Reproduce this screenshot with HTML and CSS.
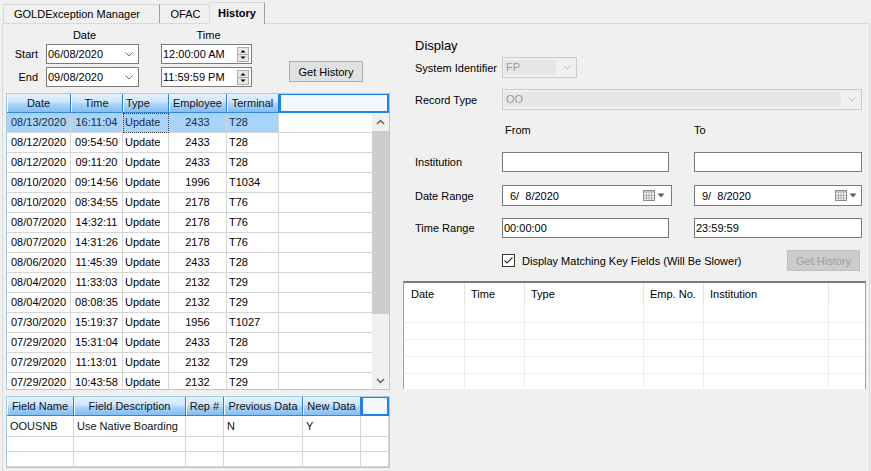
FILE: index.html
```html
<!DOCTYPE html>
<html>
<head>
<meta charset="utf-8">
<title>History</title>
<link rel="stylesheet" href="styles.css">
</head>
<body>
<div class="tabs">
  <div class="tab tab-gold">GOLDException Manager</div>
  <div class="tab tab-ofac">OFAC</div>
  <div class="tab tab-history">History</div>
</div>
<div class="page">
  <div class="left">
    <div class="dt-head"><span class="h-date">Date</span><span class="h-time">Time</span></div>
    <div class="dt-area">
      <div class="dt-rows">
        <div class="dt-row">
          <span class="dt-label">Start</span>
          <div class="combo-date"><span>06/08/2020</span><svg class="chev" width="8" height="5" viewBox="0 0 8 5"><path d="M0.5 0.5 L4 4 L7.5 0.5" fill="none" stroke="#707070"/></svg></div>
          <div class="timebox"><span>12:00:00 AM</span><svg width="12" height="15" viewBox="0 0 12 15"><rect x="0.5" y="0.5" width="11" height="7" fill="#e6e6e6" stroke="#adadad"/><rect x="0.5" y="7.5" width="11" height="7" fill="#e6e6e6" stroke="#adadad"/><path d="M3.5 5.5 L8.5 5.5 L6 3 Z" fill="#000"/><path d="M3.5 9.5 L8.5 9.5 L6 12 Z" fill="#000"/></svg></div>
        </div>
        <div class="dt-row">
          <span class="dt-label">End</span>
          <div class="combo-date"><span>09/08/2020</span><svg class="chev" width="8" height="5" viewBox="0 0 8 5"><path d="M0.5 0.5 L4 4 L7.5 0.5" fill="none" stroke="#707070"/></svg></div>
          <div class="timebox"><span>11:59:59 PM</span><svg width="12" height="15" viewBox="0 0 12 15"><rect x="0.5" y="0.5" width="11" height="7" fill="#e6e6e6" stroke="#adadad"/><rect x="0.5" y="7.5" width="11" height="7" fill="#e6e6e6" stroke="#adadad"/><path d="M3.5 5.5 L8.5 5.5 L6 3 Z" fill="#000"/><path d="M3.5 9.5 L8.5 9.5 L6 12 Z" fill="#000"/></svg></div>
        </div>
      </div>
      <button class="btn-get">Get History</button>
    </div>

    <div class="dgv grid-main">
      <div class="gh">
        <div class="hc m-date">Date</div>
        <div class="hc m-time">Time</div>
        <div class="hc m-type left">Type</div>
        <div class="hc m-emp">Employee</div>
        <div class="hc m-term">Terminal</div>
        <div class="hc-blank m-hfill"></div>
      </div>
      <div class="gb">
        <div class="rows">
          <div class="r sel"><div class="c m-date">08/13/2020</div><div class="c m-time">16:11:04</div><div class="c m-type left focus">Update</div><div class="c m-emp">2433</div><div class="c m-term left">T28</div><div class="c m-fill"></div></div>
          <div class="r"><div class="c m-date">08/12/2020</div><div class="c m-time">09:54:50</div><div class="c m-type left">Update</div><div class="c m-emp">2433</div><div class="c m-term left">T28</div><div class="c m-fill"></div></div>
          <div class="r"><div class="c m-date">08/12/2020</div><div class="c m-time">09:11:20</div><div class="c m-type left">Update</div><div class="c m-emp">2433</div><div class="c m-term left">T28</div><div class="c m-fill"></div></div>
          <div class="r"><div class="c m-date">08/10/2020</div><div class="c m-time">09:14:56</div><div class="c m-type left">Update</div><div class="c m-emp">1996</div><div class="c m-term left">T1034</div><div class="c m-fill"></div></div>
          <div class="r"><div class="c m-date">08/10/2020</div><div class="c m-time">08:34:55</div><div class="c m-type left">Update</div><div class="c m-emp">2178</div><div class="c m-term left">T76</div><div class="c m-fill"></div></div>
          <div class="r"><div class="c m-date">08/07/2020</div><div class="c m-time">14:32:11</div><div class="c m-type left">Update</div><div class="c m-emp">2178</div><div class="c m-term left">T76</div><div class="c m-fill"></div></div>
          <div class="r"><div class="c m-date">08/07/2020</div><div class="c m-time">14:31:26</div><div class="c m-type left">Update</div><div class="c m-emp">2178</div><div class="c m-term left">T76</div><div class="c m-fill"></div></div>
          <div class="r"><div class="c m-date">08/06/2020</div><div class="c m-time">11:45:39</div><div class="c m-type left">Update</div><div class="c m-emp">2433</div><div class="c m-term left">T28</div><div class="c m-fill"></div></div>
          <div class="r"><div class="c m-date">08/04/2020</div><div class="c m-time">11:33:03</div><div class="c m-type left">Update</div><div class="c m-emp">2132</div><div class="c m-term left">T29</div><div class="c m-fill"></div></div>
          <div class="r"><div class="c m-date">08/04/2020</div><div class="c m-time">08:08:35</div><div class="c m-type left">Update</div><div class="c m-emp">2132</div><div class="c m-term left">T29</div><div class="c m-fill"></div></div>
          <div class="r"><div class="c m-date">07/30/2020</div><div class="c m-time">15:19:37</div><div class="c m-type left">Update</div><div class="c m-emp">1956</div><div class="c m-term left">T1027</div><div class="c m-fill"></div></div>
          <div class="r"><div class="c m-date">07/29/2020</div><div class="c m-time">15:31:04</div><div class="c m-type left">Update</div><div class="c m-emp">2433</div><div class="c m-term left">T28</div><div class="c m-fill"></div></div>
          <div class="r"><div class="c m-date">07/29/2020</div><div class="c m-time">11:13:01</div><div class="c m-type left">Update</div><div class="c m-emp">2132</div><div class="c m-term left">T29</div><div class="c m-fill"></div></div>
          <div class="r"><div class="c m-date">07/29/2020</div><div class="c m-time">10:43:58</div><div class="c m-type left">Update</div><div class="c m-emp">2132</div><div class="c m-term left">T29</div><div class="c m-fill"></div></div>
        </div>
        <div class="vscroll">
          <div class="sb-btn"><svg width="9" height="6" viewBox="0 0 9 6"><path d="M1 5 L4.5 1.5 L8 5" fill="none" stroke="#606060" stroke-width="1.5"/></svg></div>
          <div class="sb-thumb"></div>
          <div class="sb-track"></div>
          <div class="sb-btn"><svg width="9" height="6" viewBox="0 0 9 6"><path d="M1 1 L4.5 4.5 L8 1" fill="none" stroke="#606060" stroke-width="1.5"/></svg></div>
        </div>
      </div>
    </div>

    <div class="dgv grid-detail">
      <div class="gh">
        <div class="hc d-name">Field Name</div>
        <div class="hc d-desc">Field Description</div>
        <div class="hc d-rep">Rep #</div>
        <div class="hc d-prev">Previous Data</div>
        <div class="hc d-new">New Data</div>
        <div class="hc-blank d-fill"></div>
      </div>
      <div class="r r1"><div class="c d-name left">OOUSNB</div><div class="c d-desc left">Use Native Boarding</div><div class="c d-rep"></div><div class="c d-prev left">N</div><div class="c d-new left">Y</div><div class="c d-fill"></div></div>
      <div class="r r2"><div class="c d-name"></div><div class="c d-desc"></div><div class="c d-rep"></div><div class="c d-prev"></div><div class="c d-new"></div><div class="c d-fill"></div></div>
      <div class="r r2"><div class="c d-name"></div><div class="c d-desc"></div><div class="c d-rep"></div><div class="c d-prev"></div><div class="c d-new"></div><div class="c d-fill"></div></div>
    </div>
  </div>

  <div class="right">
    <div class="disp-title">Display</div>
    <div class="frow r-sysid">
      <span class="flabel">System Identifier</span>
      <div class="combo-dis cd-sys"><span class="cd-text">FP</span><svg width="8" height="5" viewBox="0 0 8 5"><path d="M0.5 0.5 L4 4 L7.5 0.5" fill="none" stroke="#bdbdbd"/></svg></div>
    </div>
    <div class="frow r-rec">
      <span class="flabel">Record Type</span>
      <div class="combo-dis cd-rec"><span class="cd-text">OO</span><svg width="8" height="5" viewBox="0 0 8 5"><path d="M0.5 0.5 L4 4 L7.5 0.5" fill="none" stroke="#bdbdbd"/></svg></div>
    </div>
    <div class="fromto"><span class="ft-from">From</span><span class="ft-to">To</span></div>
    <div class="frow r-inst">
      <span class="flabel">Institution</span>
      <div class="tb tb1"></div>
      <div class="tb tb2"></div>
    </div>
    <div class="frow r-date">
      <span class="flabel">Date Range</span>
      <div class="dp dp1"><span class="dp-text">6/  8/2020</span><span class="dp-icons"><svg width="12" height="11" viewBox="0 0 12 11"><rect x="0.5" y="0.5" width="11" height="10" fill="#f6f6f6" stroke="#8c8c8c"/><rect x="1" y="1" width="10" height="2" fill="#c4c4c4"/><path d="M1 5.5 H11 M1 8 H11 M3.5 3 V10 M6 3 V10 M8.5 3 V10" stroke="#b0b0b0"/></svg><svg width="8" height="5" viewBox="0 0 8 5"><path d="M0.5 0.5 H7.5 L4 4.5 Z" fill="#4e5f80"/></svg></span></div>
      <div class="dp dp2"><span class="dp-text">9/  8/2020</span><span class="dp-icons"><svg width="12" height="11" viewBox="0 0 12 11"><rect x="0.5" y="0.5" width="11" height="10" fill="#f6f6f6" stroke="#8c8c8c"/><rect x="1" y="1" width="10" height="2" fill="#c4c4c4"/><path d="M1 5.5 H11 M1 8 H11 M3.5 3 V10 M6 3 V10 M8.5 3 V10" stroke="#b0b0b0"/></svg><svg width="8" height="5" viewBox="0 0 8 5"><path d="M0.5 0.5 H7.5 L4 4.5 Z" fill="#4e5f80"/></svg></span></div>
    </div>
    <div class="frow r-time">
      <span class="flabel">Time Range</span>
      <div class="tb tb1">00:00:00</div>
      <div class="tb tb2">23:59:59</div>
    </div>
    <div class="chk-row">
      <svg class="chk" width="13" height="13" viewBox="0 0 13 13"><rect x="0.5" y="0.5" width="12" height="12" fill="#fff" stroke="#333"/><path d="M2.5 6.5 L5 9 L10.5 3.5" fill="none" stroke="#333" stroke-width="1.2"/></svg>
      <span class="chk-label">Display Matching Key Fields (Will Be Slower)</span>
      <button class="btn-dis">Get History</button>
    </div>
    <div class="listview">
      <div class="lv-head">
        <div class="lh l-date">Date</div>
        <div class="lh l-time">Time</div>
        <div class="lh l-type">Type</div>
        <div class="lh l-emp">Emp. No.</div>
        <div class="lh l-inst">Institution</div>
        <div class="lh l-fill"></div>
      </div>
      <div class="lr"><div class="lc l-date"></div><div class="lc l-time"></div><div class="lc l-type"></div><div class="lc l-emp"></div><div class="lc l-inst"></div><div class="lc l-fill"></div></div>
      <div class="lr"><div class="lc l-date"></div><div class="lc l-time"></div><div class="lc l-type"></div><div class="lc l-emp"></div><div class="lc l-inst"></div><div class="lc l-fill"></div></div>
      <div class="lr"><div class="lc l-date"></div><div class="lc l-time"></div><div class="lc l-type"></div><div class="lc l-emp"></div><div class="lc l-inst"></div><div class="lc l-fill"></div></div>
      <div class="lr"><div class="lc l-date"></div><div class="lc l-time"></div><div class="lc l-type"></div><div class="lc l-emp"></div><div class="lc l-inst"></div><div class="lc l-fill"></div></div>
      <div class="lr"><div class="lc l-date"></div><div class="lc l-time"></div><div class="lc l-type"></div><div class="lc l-emp"></div><div class="lc l-inst"></div><div class="lc l-fill"></div></div>
    </div>
  </div>
</div>
</body>
</html>
```

FILE: styles.css
```css
* { box-sizing: border-box; }
html, body { margin: 0; padding: 0; }
body {
  width: 871px;
  height: 471px;
  overflow: hidden;
  background: #f0f0f0;
  font-family: "Liberation Sans", Arial, sans-serif;
  font-size: 11px;
  color: #000;
}

/* ---------- tabs ---------- */
.tabs {
  display: flex;
  align-items: flex-end;
  height: 23px;
  padding-left: 3px;
  position: relative;
  z-index: 1;
}
.tab {
  height: 19px;
  border: 1px solid #d9d9d9;
  border-bottom: none;
  background: #f0f0f0;
  line-height: 18px;
  white-space: nowrap;
  color: #000;
}
.tab-gold { width: 157px; padding-left: 10px; border-right-color: #a0a0a0; }
.tab-ofac { width: 49px; text-align: center; border-left: none; border-right: none; padding-left: 2px; }
.tab-history {
  width: 56px;
  height: 22px;
  margin-bottom: -1px;
  font-weight: bold;
  text-align: center;
  line-height: 21px;
  border-right-color: #a0a0a0;
}

/* ---------- page ---------- */
.page {
  margin-left: 2px;
  width: 868px;
  height: 448px;
  border: 1px solid #d9d9d9;
  border-bottom: none;
  display: flex;
  overflow: hidden;
}
.left { width: 392px; flex: none; }
.right { width: 474px; flex: none; padding-left: 8px; }

/* ---------- date/time block ---------- */
.dt-head { display: flex; height: 13px; margin-top: 5px; padding-left: 59px; line-height: 13px; }
.dt-head span { width: 45px; text-align: center; }
.dt-head .h-time { margin-left: 79px; }

.dt-area { display: flex; margin-top: 2px; }
.dt-rows { display: flex; flex-direction: column; gap: 3px; }
.dt-row { display: flex; align-items: center; height: 20px; }
.dt-label { width: 43px; text-align: right; padding-right: 8px; }
.combo-date {
  width: 93px;
  height: 20px;
  border: 1px solid #7a7a7a;
  background: #fff;
  display: flex;
  align-items: center;
  justify-content: space-between;
  padding: 0 5px 0 1px;
}
.timebox {
  margin-left: 22px;
  width: 91px;
  height: 20px;
  border: 1px solid #7a7a7a;
  background: #fff;
  display: flex;
  align-items: center;
  justify-content: space-between;
  padding: 0 2px 0 1px;
}
.btn-get {
  margin-left: 37px;
  align-self: flex-end;
  margin-bottom: 5px;
  width: 74px;
  height: 21px;
  background: #e1e1e1;
  border: 1px solid #adadad;
  font: inherit;
  color: #000;
  padding: 0;
}

/* ---------- data grids ---------- */
.dgv {
  margin-left: 3px;
  width: 384px;
  border: 1px solid #a3cfe3;
  background: #fff;
  overflow: hidden;
}
.grid-main { margin-top: 6px; height: 297px; }
.grid-detail { margin-top: 6px; }

.gh { display: flex; height: 19px; }
.hc {
  flex: none;
  height: 19px;
  line-height: 18px;
  background: linear-gradient(#e6f2fe 0%, #cbe5fc 45%, #acd4f9 55%, #82bef4 100%);
  border-right: 1px solid #2a7fd6;
  border-bottom: 1px solid #3587d8;
  box-shadow: inset 1px 0 0 #f6fbff;
  text-align: center;
  color: #141414;
  white-space: nowrap;
  overflow: hidden;
}
.hc.left { text-align: left; padding-left: 3px; }
.hc-blank {
  flex: none;
  height: 19px;
  background: #f3f8fe;
  border: 2px solid #1a84e9;
  border-top-width: 1px;
}

.m-date { width: 64px; }
.m-time { width: 52px; }
.m-type { width: 46px; }
.m-emp { width: 58px; }
.m-term { width: 52px; }
.m-hfill { width: 110px; }
.m-fill { width: 93px; border-right: none !important; }

.gb { display: flex; height: 276px; }
.rows { width: 365px; flex: none; }
.r { display: flex; height: 20px; }
.c {
  flex: none;
  height: 20px;
  line-height: 19px;
  border-right: 1px solid #d5d5d5;
  border-bottom: 1px solid #d5d5d5;
  text-align: center;
  white-space: nowrap;
  overflow: hidden;
}
.c.left { text-align: left; padding-left: 2px; }
.r.sel .c { background: #a8d4fb; color: #1e2b44; }
.r.sel .c.m-fill { background: #fff; }
.c.focus { outline: 1px dotted #3a3a3a; outline-offset: -1px; }

.vscroll { width: 17px; flex: none; background: #f0f0f0; display: flex; flex-direction: column; }
.sb-btn { height: 17px; flex: none; display: flex; align-items: center; justify-content: center; }
.sb-thumb { height: 183px; margin-top: 1px; background: #cdcdcd; flex: none; }
.sb-track { flex: 1; }

.d-name { width: 67px; }
.d-desc { width: 112px; }
.d-rep { width: 38px; }
.d-prev { width: 79px; }
.d-new { width: 58px; }
.d-fill { width: 28px; }
.grid-detail .r1, .grid-detail .r1 .c { height: 21px; line-height: 20px; }
.grid-detail .r2, .grid-detail .r2 .c { height: 15px; }
.grid-detail .c.left { padding-left: 3px; color: #111; }

/* ---------- right form ---------- */
.disp-title { margin-top: 14px; padding-left: 12px; font-size: 13px; line-height: 15px; }
.frow { display: flex; align-items: center; padding-left: 12px; }
.flabel { width: 87px; flex: none; white-space: nowrap; }
.r-sysid { margin-top: 4px; height: 21px; }
.r-rec { margin-top: 11px; height: 21px; }
.combo-dis {
  height: 21px;
  border: 1px solid #cccccc;
  background: #f0f0f0;
  display: flex;
  align-items: center;
  padding: 2px 5px 2px 1px;
  gap: 7px;
}
.cd-text {
  flex: 1;
  height: 15px;
  line-height: 15px;
  background: #e7e7e7;
  color: #9a9a9a;
  padding-left: 2px;
}
.cd-sys { width: 75px; }
.cd-rec { width: 360px; }

.fromto { display: flex; margin-top: 14px; height: 13px; line-height: 13px; padding-left: 102px; }
.ft-from { width: 189px; }

.r-inst { margin-top: 15px; height: 20px; }
.r-date { margin-top: 13px; height: 21px; }
.r-time { margin-top: 12px; height: 20px; }
.tb {
  height: 20px;
  border: 1px solid #7a7a7a;
  background: #fff;
  padding-left: 1px;
  line-height: 18px;
}
.tb1 { width: 167px; }
.tb2 { width: 168px; margin-left: 25px; }
.dp {
  height: 21px;
  border: 1px solid #7a7a7a;
  background: #fff;
  display: flex;
  align-items: center;
  justify-content: space-between;
  padding: 0 6px 0 7px;
}
.dp-text { white-space: pre; }
.dp-icons { display: flex; align-items: center; gap: 2px; }
.dp1 { width: 170px; }
.dp2 { width: 168px; margin-left: 22px; padding-right: 4px; }

.chk-row {
  display: flex;
  align-items: center;
  margin-top: 12px;
  height: 21px;
  padding-left: 99px;
  width: 463px;
}
.chk { flex: none; }
.chk-label { margin-left: 7px; white-space: nowrap; }
.btn-dis {
  margin-left: auto;
  margin-right: 6px;
  width: 73px;
  height: 21px;
  background: #cccccc;
  border: 1px solid #bfbfbf;
  color: #a0a0a0;
  font: inherit;
  padding: 0;
}

/* ---------- list view ---------- */
.listview {
  margin-top: 10px;
  width: 463px;
  height: 108px;
  background: #fff;
  border-left: 1px solid #a0a0a0;
  border-right: 1px solid #a0a0a0;
  border-top: 2px solid #7a7a7a;
  overflow: hidden;
}
.lv-head { display: flex; height: 23px; }
.lh {
  flex: none;
  height: 23px;
  line-height: 23px;
  padding-left: 6px;
  border-right: 1px solid #e5e5e5;
  white-space: nowrap;
}
.lh.l-date { padding-left: 7px; }
.lh.l-fill { border-right: none; }
.lr { display: flex; height: 17px; }
.lc {
  flex: none;
  height: 17px;
  border-right: 1px solid #ededed;
  border-bottom: 1px solid #ededed;
}
.lc.l-fill { border-right: none; }
.l-date { width: 61px; }
.l-time { width: 60px; }
.l-type { width: 119px; }
.l-emp { width: 60px; }
.l-inst { width: 125px; }
.l-fill { width: 36px; }
```
